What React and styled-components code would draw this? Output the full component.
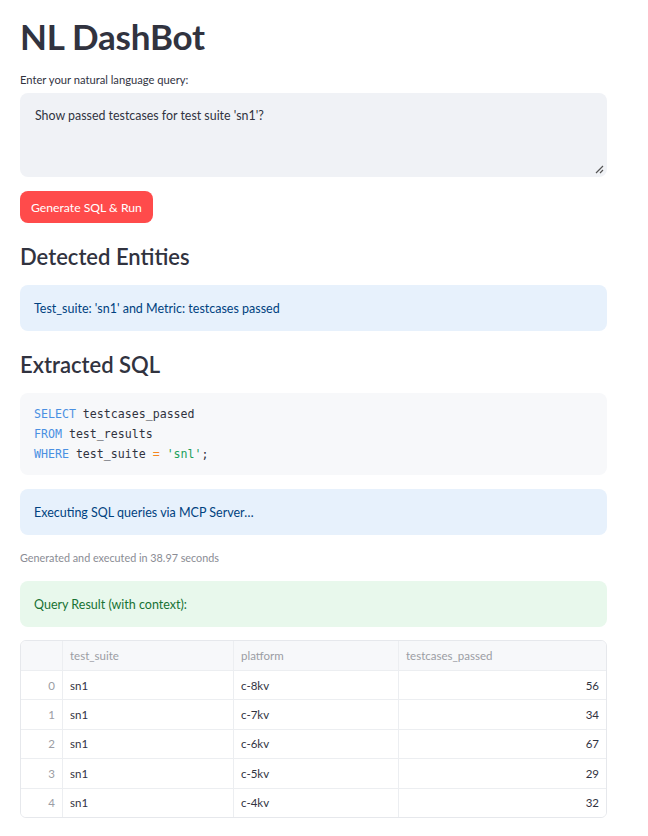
import React from "react";
import styled, { createGlobalStyle } from "styled-components";

const GlobalStyle = createGlobalStyle`
    body {
        margin: 0;
        background: #ffffff;
        font-family: Lato, "Noto Sans", sans-serif;
        color: #31333f;
    }
`;

const Page = styled.div`
    width: 587px;
    padding: 12px 20px 20px;
    display: flex;
    flex-direction: column;
`;

const Title = styled.h1`
    margin: 0;
    font-size: 35px;
    font-weight: 700;
    line-height: 48px;
    color: #31333f;
    letter-spacing: -0.2px;
`;

const Label = styled.label`
    margin-top: 12px;
    font-size: 11.2px;
    line-height: 16px;
    color: #31333f;
`;

const TextArea = styled.div`
    position: relative;
    margin-top: 5px;
    height: 84px;
    box-sizing: border-box;
    background: #f0f2f6;
    border-radius: 8px;
    padding: 14px 15px;
    font-size: 12.4px;
    line-height: 18px;
    color: #31333f;
`;

const Grip = styled.svg`
    position: absolute;
    right: 3px;
    bottom: 3px;
`;

const Button = styled.button`
    align-self: flex-start;
    margin-top: 14px;
    height: 32px;
    padding: 0 11px;
    border: none;
    border-radius: 8px;
    background: #ff4b4b;
    color: #ffffff;
    font-family: inherit;
    font-size: 12.2px;
`;

const Heading = styled.h2`
    margin: ${({first}) => first ? "20px" : "20px"} 0 0;
    font-size: 22px;
    font-weight: 600;
    line-height: 28px;
    color: #31333f;
`;

const Alert = styled.div`
    margin-top: ${({gap}) => gap || 14}px;
    height: 46px;
    box-sizing: border-box;
    padding: 0 14px;
    display: flex;
    align-items: center;
    border-radius: 8px;
    font-size: 12.5px;
    background: ${({kind}) => kind === "success" ? "#e8f8ec" : "#e7f1fc"};
    color: ${({kind}) => kind === "success" ? "#177233" : "#004280"};
`;

const Code = styled.pre`
    margin: 14px 0 0;
    padding: 11px 14px;
    border-radius: 8px;
    background: #f7f8fa;
    font-family: "DejaVu Sans Mono", "Liberation Mono", monospace;
    font-size: 11.6px;
    line-height: 20px;
    color: #31333f;
`;

const Kw = styled.span`
    color: #4a90e2;
`;

const Op = styled.span`
    color: #f5871f;
`;

const Str = styled.span`
    color: #20a05a;
`;

const Caption = styled.div`
    margin-top: 15px;
    font-size: 10.8px;
    line-height: 16px;
    color: #8a8c94;
`;

const Table = styled.div`
    margin-top: 13px;
    border: 1px solid #e6e8ec;
    border-radius: 6px;
    overflow: hidden;
    display: grid;
    grid-template-columns: 42px 171px 165px 1fr;
    font-size: 11.5px;
`;

const Cell = styled.div`
    height: ${({head}) => head ? 29 : 28.4}px;
    display: flex;
    align-items: center;
    justify-content: ${({num}) => num ? "flex-end" : "flex-start"};
    padding: 0 7px;
    border-right: ${({last}) => last ? "none" : "1px solid #eceef1"};
    border-bottom: ${({bottom}) => bottom ? "none" : "1px solid #eceef1"};
    background: ${({head}) => head ? "#f7f8fa" : "#ffffff"};
    color: ${({muted}) => muted ? "#9b9da4" : "#31333f"};
`;

const rows = [
    ["sn1", "c-8kv", 56],
    ["sn1", "c-7kv", 34],
    ["sn1", "c-6kv", 67],
    ["sn1", "c-5kv", 29],
    ["sn1", "c-4kv", 32],
];

const App = () => {
    return <>
        <GlobalStyle/>
        <Page>
            <Title>NL DashBot</Title>
            <Label>Enter your natural language query:</Label>
            <TextArea>
                Show passed testcases for test suite 'sn1'?
                <Grip width="10" height="10" viewBox="0 0 10 10">
                    <path d="M9 2 L2 9 M9 6 L6 9" stroke="#555" strokeWidth="1.2" fill="none"/>
                </Grip>
            </TextArea>
            <Button>Generate SQL &amp; Run</Button>

            <Heading first>Detected Entities</Heading>
            <Alert>Test_suite: 'sn1' and Metric: testcases passed</Alert>

            <Heading>Extracted SQL</Heading>
            <Code>
                <Kw>SELECT</Kw> testcases_passed{"\n"}
                <Kw>FROM</Kw> test_results{"\n"}
                <Kw>WHERE</Kw> test_suite <Op>=</Op> <Str>'snl'</Str>;
            </Code>

            <Alert>Executing SQL queries via MCP Server…</Alert>
            <Caption>Generated and executed in 38.97 seconds</Caption>
            <Alert kind="success" gap={15}>Query Result (with context):</Alert>

            <Table>
                <Cell head/>
                <Cell head muted>test_suite</Cell>
                <Cell head muted>platform</Cell>
                <Cell head muted last>testcases_passed</Cell>
                {rows.map(([suite, platform, passed], i) => {
                    const bottom = i === rows.length - 1;
                    return <React.Fragment key={i}>
                        <Cell num muted bottom={bottom}>{i}</Cell>
                        <Cell bottom={bottom}>{suite}</Cell>
                        <Cell bottom={bottom}>{platform}</Cell>
                        <Cell num last bottom={bottom}>{passed}</Cell>
                    </React.Fragment>;
                })}
            </Table>
        </Page>
    </>;
};

export default App;
